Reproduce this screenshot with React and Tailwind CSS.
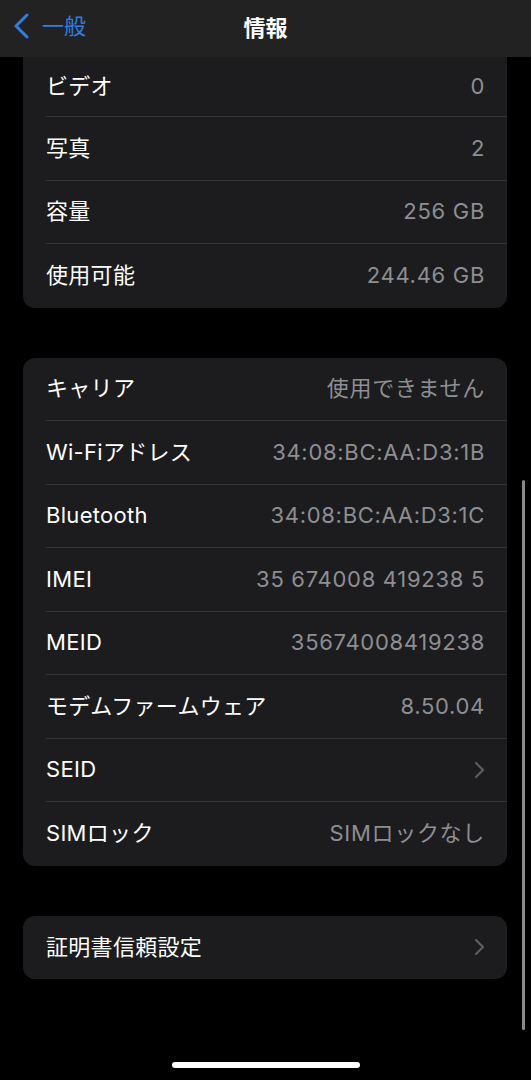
import React from 'react';

const font = { fontFamily: "Inter, 'Noto Sans CJK JP', sans-serif" };

const Chevron = () => (
  <svg width="11" height="18" viewBox="0 0 11 18" fill="none">
    <path d="M2 2l7 7-7 7" stroke="#5c5c61" strokeWidth="2.2" strokeLinecap="round" strokeLinejoin="round" />
  </svg>
);

const Row = ({ label, value, chevron, last, first }) => (
  <div className={`flex items-stretch pl-[23px] ${first ? 'h-[60px]' : 'h-[63.5px]'}`}>
    <div
      className={`flex flex-1 items-center justify-between pr-[22px] ${
        last ? '' : 'border-b border-[#343437]'
      }`}
    >
      <span className="text-[22px] text-white tracking-[0.3px]">{label}</span>
      {chevron ? (
        <Chevron />
      ) : (
        <span className="text-[22px] text-[#8e8e93] tracking-[0.7px]">{value}</span>
      )}
    </div>
  </div>
);

const Group = ({ rows, className = '' }) => (
  <div className={`mx-[23px] mr-[24px] bg-[#1c1c1e] ${className}`}>
    {rows.map((r, i) => (
      <Row key={r.label} {...r} last={i === rows.length - 1} />
    ))}
  </div>
);

const App = () => {
  const media = [
    { label: 'ビデオ', value: '0', first: true },
    { label: '写真', value: '2' },
    { label: '容量', value: '256 GB' },
    { label: '使用可能', value: '244.46 GB' },
  ];

  const network = [
    { label: 'キャリア', value: '使用できません' },
    { label: 'Wi-Fiアドレス', value: '34:08:BC:AA:D3:1B' },
    { label: 'Bluetooth', value: '34:08:BC:AA:D3:1C' },
    { label: 'IMEI', value: '35 674008 419238 5' },
    { label: 'MEID', value: '35674008419238' },
    { label: 'モデムファームウェア', value: '8.50.04' },
    { label: 'SEID', chevron: true },
    { label: 'SIMロック', value: 'SIMロックなし' },
  ];

  return (
    <div className="relative w-[531px] h-[1080px] overflow-hidden bg-black" style={font}>
      {/* nav bar */}
      <div className="relative flex h-[57px] items-center justify-center bg-[#222222]">
        <div className="absolute left-[13px] top-[13px] flex items-center gap-[12px]">
          <svg width="17" height="26" viewBox="0 0 17 26" fill="none">
            <path d="M14 2L3 13l11 11" stroke="#2f7ee6" strokeWidth="3" strokeLinecap="round" strokeLinejoin="round" />
          </svg>
          <span className="text-[22px] leading-none text-[#2f7ee6]">一般</span>
        </div>
        <span className="text-[22px] font-bold text-white">情報</span>
      </div>

      <Group rows={media} className="rounded-b-[12px]" />
      <Group rows={network} className="mt-[50px] rounded-[12px]" />
      <Group rows={[{ label: '証明書信頼設定', chevron: true }]} className="mt-[50px] rounded-[12px]" />

      {/* scroll indicator */}
      <div className="absolute left-[522px] top-[480px] h-[550px] w-[3px] rounded-full bg-[#8a8a8a]" />
      {/* home indicator */}
      <div className="absolute left-[172px] top-[1062px] h-[6px] w-[188px] rounded-full bg-white" />
    </div>
  );
};

export default App;
